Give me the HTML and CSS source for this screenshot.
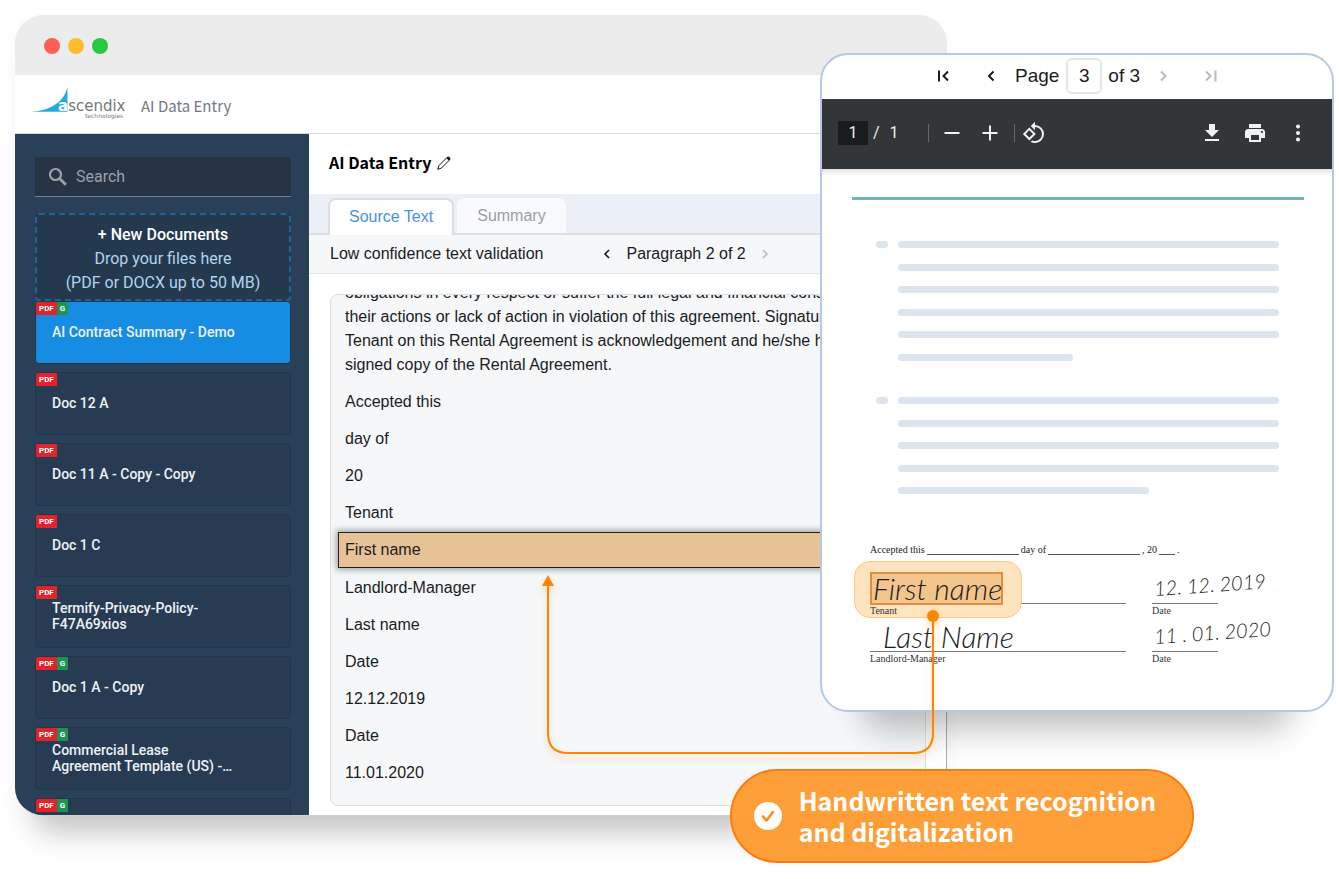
FILE: index.html
```html
<!DOCTYPE html>
<html lang="en">
<head>
<meta charset="utf-8">
<title>AI Data Entry</title>
<link rel="stylesheet" href="styles.css">
</head>
<body>
<div class="scene">
  <div class="window">
    <div class="titlebar">
      <span class="dot dot-red"></span>
      <span class="dot dot-yellow"></span>
      <span class="dot dot-green"></span>
    </div>
    <header class="header">
      <div class="logo">
        <svg class="logo-sail" viewBox="0 0 36 26" aria-hidden="true"><path d="M0 24.500C18 23 31 15 34.500 0V24.800H0Z" fill="#27aae1"/></svg>
        <span class="logo-word"><b class="logo-a">a</b>scendix</span>
        <span class="logo-sub">technologies</span>
      </div>
      <span class="product">AI Data Entry</span>
    </header>
    <div class="body">
      <aside class="sidebar">
        <label class="search">
          <svg class="icon-search" viewBox="0 0 20 20" aria-hidden="true"><circle cx="7.500" cy="7.500" r="5.500" fill="none" stroke="currentColor" stroke-width="2.200"/><path d="M11.800 11.800L17.800 17.800" stroke="currentColor" stroke-width="2.800"/></svg>
          <input class="search-input" type="search" placeholder="Search" aria-label="Search">
        </label>
        <button class="dropzone"><strong class="drop-title">+ New Documents</strong><span>Drop your files here</span><span>(PDF or DOCX up to 50 MB)</span></button>
        <ul class="docs">
          <li class="doc doc-active"><span class="tags"><span class="tag">PDF</span><span class="tag tag-g">G</span></span><a class="doc-name" href="#">AI Contract Summary - Demo</a></li>
          <li class="doc"><span class="tags"><span class="tag">PDF</span></span><a class="doc-name" href="#">Doc 12 A</a></li>
          <li class="doc"><span class="tags"><span class="tag">PDF</span></span><a class="doc-name" href="#">Doc 11 A - Copy - Copy</a></li>
          <li class="doc"><span class="tags"><span class="tag">PDF</span></span><a class="doc-name" href="#">Doc 1 C</a></li>
          <li class="doc"><span class="tags"><span class="tag">PDF</span></span><a class="doc-name" href="#">Termify-Privacy-Policy-<br>F47A69xios</a></li>
          <li class="doc"><span class="tags"><span class="tag">PDF</span><span class="tag tag-g">G</span></span><a class="doc-name" href="#">Doc 1 A - Copy</a></li>
          <li class="doc"><span class="tags"><span class="tag">PDF</span><span class="tag tag-g">G</span></span><a class="doc-name" href="#">Commercial Lease<br>Agreement Template (US) -…</a></li>
          <li class="doc"><span class="tags"><span class="tag">PDF</span><span class="tag tag-g">G</span></span></li>
        </ul>
      </aside>
      <main class="main">
        <div class="title-row">
          <h1 class="title">AI Data Entry</h1>
          <button class="icon-btn edit" aria-label="Edit title"><svg viewBox="0 0 14 14"><path d="M0.700 13.300L1.800 9.700L9.800 1.700Q11.200 0.300 12.500 1.500Q13.700 2.800 12.300 4.200L4.300 12.200Z" fill="none" stroke="#111" stroke-width="1"/><path d="M9.500 2.200L11 0.800L13.200 3L11.800 4.500Z" fill="#111"/></svg></button>
        </div>
        <div class="tabs">
          <button class="tab tab-on">Source Text</button>
          <button class="tab">Summary</button>
        </div>
        <div class="validation">
          <span>Low confidence text validation</span>
          <div class="para-nav">
            <button class="icon-btn" aria-label="Previous paragraph"><svg viewBox="0 0 16 16"><path d="M10 4L6 8L10 12" class="chev"/></svg></button>
            <span>Paragraph 2 of 2</span>
            <button class="icon-btn off" aria-label="Next paragraph"><svg viewBox="0 0 16 16"><path d="M6 4L10 8L6 12" class="chev"/></svg></button>
          </div>
        </div>
        <div class="source">
          <div class="panel">
            <div class="text">
              <p class="long">obligations in every respect or suffer the full legal and financial consequences of<br>their actions or lack of action in violation of this agreement. Signature of the<br>Tenant on this Rental Agreement is acknowledgement and he/she has received a<br>signed copy of the Rental Agreement.</p>
              <p>Accepted this</p>
              <p>day of</p>
              <p>20</p>
              <p>Tenant</p>
              <p class="hit">First name</p>
              <p>Landlord-Manager</p>
              <p>Last name</p>
              <p>Date</p>
              <p>12.12.2019</p>
              <p>Date</p>
              <p>11.01.2020</p>
            </div>
          </div>
        </div>
      </main>
    </div>
  </div>

  <section class="viewer">
    <div class="pager">
      <button class="icon-btn" aria-label="First page"><svg viewBox="0 0 24 24"><path d="M8 6.500V17.500M17 7.500L12.500 12L17 16.500" class="chev2"/></svg></button>
      <button class="icon-btn prev" aria-label="Previous page"><svg viewBox="0 0 24 24"><path d="M14.500 7.500L10 12L14.500 16.500" class="chev2"/></svg></button>
      <label for="page">Page</label>
      <input class="page-input" id="page" value="3">
      <span>of 3</span>
      <button class="icon-btn off next" aria-label="Next page"><svg viewBox="0 0 24 24"><path d="M10 7.500L14.500 12L10 16.500" class="chev2"/></svg></button>
      <button class="icon-btn off last" aria-label="Last page"><svg viewBox="0 0 24 24"><path d="M7 7.500L11.500 12L7 16.500M16.500 6.500V17.500" class="chev2"/></svg></button>
    </div>
    <div class="toolbar">
      <input class="sheet-input" value="1" aria-label="Sheet">
      <span class="slash">/</span><span class="total">1</span>
      <span class="sep"></span>
      <button class="icon-btn" aria-label="Zoom out"><svg viewBox="0 0 24 24"><path d="M4.500 12H19.500" stroke="currentColor" stroke-width="2"/></svg></button>
      <button class="icon-btn plus" aria-label="Zoom in"><svg viewBox="0 0 24 24"><path d="M4.500 12H19.500M12 4.500V19.500" stroke="currentColor" stroke-width="2"/></svg></button>
      <span class="sep"></span>
      <button class="icon-btn rotate" aria-label="Rotate"><svg viewBox="0 0 24 24" fill="currentColor"><path d="M7.340 6.410L.86 12.900l6.490 6.480 6.490-6.480-6.500-6.490zM3.690 12.900l3.660-3.660L11 12.900l-3.660 3.660-3.650-3.660zm15.670-6.260A8.950 8.950 0 0 0 13 4V.76L8.760 5 13 9.240V6c1.790 0 3.580.68 4.950 2.050a7.007 7.007 0 0 1 0 9.900 6.973 6.973 0 0 1-7.790 1.440l-1.490 1.490C10.020 21.620 11.510 22 13 22c2.300 0 4.610-.88 6.360-2.640a8.980 8.980 0 0 0 0-12.720z"/></svg></button>
      <span class="tools">
        <button class="icon-btn" aria-label="Download"><svg viewBox="0 0 24 24" fill="currentColor"><path d="M19 9h-4V3H9v6H5l7 7 7-7zM5 18v2h14v-2H5z"/></svg></button>
        <button class="icon-btn" aria-label="Print"><svg viewBox="0 0 24 24" fill="currentColor"><path d="M19 8H5c-1.660 0-3 1.340-3 3v6h4v4h12v-4h4v-6c0-1.660-1.340-3-3-3zm-3 11H8v-5h8v5zm3-7c-.55 0-1-.45-1-1s.45-1 1-1 1 .45 1 1-.45 1-1 1zm-1-9H6v4h12V3z"/></svg></button>
        <button class="icon-btn" aria-label="More"><svg viewBox="0 0 24 24" fill="currentColor"><circle cx="12" cy="5.500" r="2"/><circle cx="12" cy="12" r="2"/><circle cx="12" cy="18.500" r="2"/></svg></button>
      </span>
    </div>
    <div class="sheet">
      <hr class="rule">
      <div class="block block-six"><i class="bullet"></i><i class="bar"></i><i class="bar"></i><i class="bar"></i><i class="bar"></i><i class="bar"></i><i class="bar bar-short"></i></div>
      <div class="block block-five"><i class="bullet"></i><i class="bar"></i><i class="bar"></i><i class="bar"></i><i class="bar"></i><i class="bar bar-mid"></i></div>
      <div class="accepted"><span>Accepted this</span><i class="blank"></i><span>day of</span><i class="blank"></i><span class="year">, 20</span><i class="blank blank-year"></i><span>.</span></div>
      <div class="signs">
        <div class="sign sign-top">
          <div class="ink"><span class="glow"></span><span class="mark"></span><span class="hand">First name</span></div>
          <span class="sign-label">Tenant</span>
        </div>
        <div class="sign sign-top"><div class="ink"><span class="hand hand-date">12. 12. 2019</span></div><span class="sign-label">Date</span></div>
        <div class="sign"><div class="ink ink-last"><span class="hand">Last Name</span></div><span class="sign-label">Landlord-Manager</span></div>
        <div class="sign"><div class="ink"><span class="hand hand-date">11 . 01. 2020</span></div><span class="sign-label">Date</span></div>
      </div>
    </div>
  </section>

  <svg class="connector" viewBox="0 0 410 195" aria-hidden="true">
    <path d="M398 46V163Q398 183 378 183H33Q13 183 13 163V12" fill="none" stroke="#ff8500" stroke-width="2"/>
    <path d="M13 5L19 16H7Z" fill="#ff8500"/>
    <circle cx="398" cy="46" r="6" fill="#ff8500"/>
  </svg>

  <div class="callout">
    <svg class="check" viewBox="0 0 28 28" aria-hidden="true"><circle cx="14" cy="14" r="14" fill="#fff"/><path d="M9 14.500L12.500 18.500L19 10" fill="none" stroke="#ff8a1c" stroke-width="2.600" stroke-linecap="round" stroke-linejoin="round"/></svg>
    <span>Handwritten text recognition<br>and digitalization</span>
  </div>
</div>
</body>
</html>
```

FILE: styles.css
```css
* { box-sizing: border-box; }
body { margin: 0; background: #fff; color: #1b1c1d; font: 16px/24px "Liberation Sans", Arial, sans-serif; }
button, input { font: inherit; color: inherit; border: 0; margin: 0; padding: 0; background: none; }
svg { display: block; width: 100%; height: 100%; }
.scene { position: relative; height: 100vh; min-height: 860px; overflow: hidden; padding: 15px 392px 0 15px; }

.window { display: flex; flex-direction: column; height: calc(100% - 63px); border-radius: 28px 28px 0 28px; box-shadow: 0 38px 30px -22px rgba(0, 0, 0, .22), 0 10px 24px rgba(0, 0, 0, .03); background: #fff; }
.titlebar { display: flex; align-items: center; gap: 8px; height: 60px; flex: none; padding: 2px 29px 0; background: #ececec; border-radius: 28px 28px 0 0; }
.dot { width: 16px; height: 16px; border-radius: 50%; }
.dot-red { background: #ff5f57; }
.dot-yellow { background: #febc2e; }
.dot-green { background: #28c840; }

.header { display: flex; align-items: center; gap: 14px; height: 59px; flex: none; padding: 4px 18px 0; border-bottom: 1px solid #d8dcdf; }
.logo { position: relative; width: 94px; height: 38px; }
.logo-sail { position: absolute; left: 0; top: 0; width: 36px; height: 26px; }
.logo-word { position: absolute; left: 25px; top: 9px; font: 15px/20px "DejaVu Sans", sans-serif; color: #777; }
.logo-a { color: #fff; }
.logo-sub { position: absolute; left: 52px; top: 25px; font: 6px/8px "DejaVu Sans", sans-serif; color: #777; }
.product { font: 15px/24px "Noto Sans CJK SC", sans-serif; color: #737982; }

.body { display: flex; flex: 1; min-height: 0; border-right: 1px solid #a9b0b3; border-bottom: 1px solid #ccd1d4; border-radius: 0 0 0 28px; overflow: hidden; }
.sidebar { width: 294px; flex: none; padding: 23px 18px 0 20px; overflow: hidden; background: #294058; font-family: Roboto, sans-serif; color: #fff; }
.search { display: flex; align-items: center; gap: 8px; height: 40px; padding: 0 13px; background: #273444; border-bottom: 1px solid #727c8b; color: #9ba1a8; }
.icon-search { width: 20px; height: 20px; flex: none; }
.search-input { min-width: 0; flex: 1; outline: 0; }
.search-input::placeholder { color: #9ba1a8; opacity: 1; }
.dropzone { display: flex; flex-direction: column; align-items: center; width: 100%; margin-top: 16px; padding: 8px 0 4px; border: 2px dashed #1f639b; border-radius: 4px; background: #24384e; color: #b3d4ed; }
.drop-title { font-weight: 500; color: #fff; }
.docs { display: flex; flex-direction: column; gap: 8px; margin: 0; padding: 0; list-style: none; }
.doc { position: relative; display: flex; align-items: center; height: 63px; flex: none; padding: 0 16px 2px; background: #273c53; border: 1px solid #22364b; border-radius: 4px; }
.doc-active { background: #168de2; }
.doc-name { font-size: 14px; font-weight: 500; line-height: 16px; color: #eef2f5; text-decoration: none; }
.tags { position: absolute; left: 0; top: 0; display: flex; font: bold 8px/13px Roboto, sans-serif; }
.tag { padding: 0 3px; background: #e3232a; color: #fff; border-radius: 2px 0 0 0; }
.tag-g { background: #1c9254; border-radius: 0; }

.main { display: flex; flex-direction: column; flex: 1; min-width: 0; background: #fff; }
.title-row { display: flex; align-items: center; gap: 6px; height: 60px; padding: 0 20px 4px; }
.title { margin: 0; font: bold 16px/24px "Noto Sans CJK SC", sans-serif; color: #000; }
.icon-btn { flex: none; width: 24px; height: 24px; }
.edit { width: 14px; height: 14px; margin-top: 2px; }
.off { color: #b8bbbd; }
.chev, .chev2 { fill: none; stroke: currentColor; stroke-width: 1.6; }
.chev2 { stroke-width: 2; }
.tabs { display: flex; align-items: flex-end; gap: 3px; height: 41px; padding: 4px 19px 0; background: #ebeff8; border-bottom: 2px solid #dadfe0; }
.tab { height: 35px; padding: 0 20px; border-radius: 8px 8px 0 0; background: #f9fafd; color: #9a9fa2; }
.tab-on { height: 37px; margin-bottom: -2px; padding: 0 19px 2px; border: 2px solid #dadfe0; border-bottom: 0; background: #fff; color: #4a90e2; }
.validation { display: flex; align-items: center; gap: 56px; height: 39px; flex: none; padding: 0 21px; background: #f5f7f9; border-bottom: 1px solid #dfe6e6; }
.para-nav { display: flex; align-items: center; gap: 11px; }
.para-nav .icon-btn { width: 16px; height: 16px; }
.source { flex: 1; min-height: 0; padding: 20px 20px 9px 21px; }
.panel { height: 100%; overflow: hidden; border: 1px solid #dadee2; border-radius: 8px; background: #f5f7f9; }
.text { margin-top: -14px; padding: 0 14px; white-space: nowrap; }
.text p { margin: 0 0 13px; }
.text .hit { margin: -6px -7px 8px; padding: 5px 6px; border: 1px solid #222; background: #e7c296; box-shadow: 0 0 6px 2px rgba(60, 70, 70, .45); }

.viewer { position: absolute; top: 53px; right: 5px; width: 514px; border: 2px solid #b6c8e2; border-radius: 28px; overflow: hidden; background: #fff; }
.scene::before { content: ""; position: absolute; top: 100px; right: 45px; width: 434px; height: 611px; border-radius: 28px; box-shadow: 0 20px 32px rgba(0, 0, 0, .24); }
.pager { display: flex; align-items: center; justify-content: center; height: 44px; padding-bottom: 2px; font-size: 19px; }
.prev { margin: 0 12px 0 24px; }
.page-input { width: 36px; height: 36px; margin: 0 6px 0 7px; border: 2px solid #e6e6e8; border-radius: 6px; text-align: center; }
.next { margin: 0 24px 0 11px; }
.toolbar { display: flex; align-items: center; height: 70px; padding: 0 22px 2px 16px; background: #323639; color: #f1f1f1; font-family: Roboto, sans-serif; }
.sheet-input { width: 30px; height: 24px; background: #191b1c; text-align: center; }
.slash { margin-left: 5px; }
.total { margin: 0 29px 0 10px; }
.sep { width: 1px; height: 18px; background: #63676a; margin-right: 11px; }
.plus { margin: 0 12px 0 14px; }
.rotate { margin-left: -4px; }
.tools { display: flex; gap: 19px; margin-left: auto; }
.sheet { padding: 28px 28px 33px 30px; box-shadow: inset 0 7px 6px -5px rgba(0, 0, 0, .16); }
.rule { height: 3px; margin: 0 0 41px; border: 0; background: #75b5b6; }
.block { position: relative; display: flex; flex-direction: column; justify-content: space-between; margin: 0 25px 36px 46px; }
.block-six { height: 120px; }
.block-five { height: 97px; }
.bar, .bullet { height: 7px; border-radius: 4px; background: #dce4ed; }
.bullet { position: absolute; left: -22px; top: 0; width: 12px; }
.bar-short { width: 46%; }
.bar-mid { width: 66%; }
.accepted { display: flex; gap: 2px; margin: 50px 0 0 18px; font: 10px/12px "Liberation Serif", serif; color: #222; }
.blank { width: 92px; height: 11px; border-bottom: 1px solid #555; }
.blank-year { width: 16px; }
.signs { display: grid; grid-template-columns: 256px 66px; column-gap: 26px; margin-left: 18px; }
.sign { height: 60px; }
.sign-top { height: 61px; }
.ink { position: relative; display: flex; align-items: flex-end; height: 35px; padding-left: 3px; border-bottom: 1px solid #777; white-space: nowrap; }
.sign-top .ink { height: 48px; }
.ink-last { padding-left: 13px; }
.hand { position: relative; font: italic 300 30px/30px Lato, sans-serif; color: #1c1c1c; }
.hand-date { font-size: 20px; transform: rotate(-4deg); transform-origin: left bottom; }
.glow { position: absolute; left: -16px; top: 5px; width: 168px; height: 57px; border: 1px solid #fcc985; border-radius: 16px; background: #fee3bf; }
.mark { position: absolute; left: 0; bottom: -2px; width: 133px; height: 33px; border: 2px solid #e08d42; background: #f2c58c; }
.sign-label { position: relative; display: block; font: 10px/13px "Liberation Serif", serif; color: #333; }

.connector { position: absolute; top: 570px; right: 394px; width: 410px; height: 195px; overflow: visible; filter: drop-shadow(0 5px 3px rgba(255, 140, 0, .3)); }
.callout { position: absolute; top: 769px; right: 145px; display: flex; align-items: center; gap: 17px; padding: 14px 36px 14px 22px; border: 2px solid #ff7a0d; border-radius: 47px; background: rgba(255, 154, 46, .95); color: #fff; font: bold 25px/31px "Noto Sans CJK SC", sans-serif; white-space: nowrap; }
.check { width: 28px; height: 28px; }
```
